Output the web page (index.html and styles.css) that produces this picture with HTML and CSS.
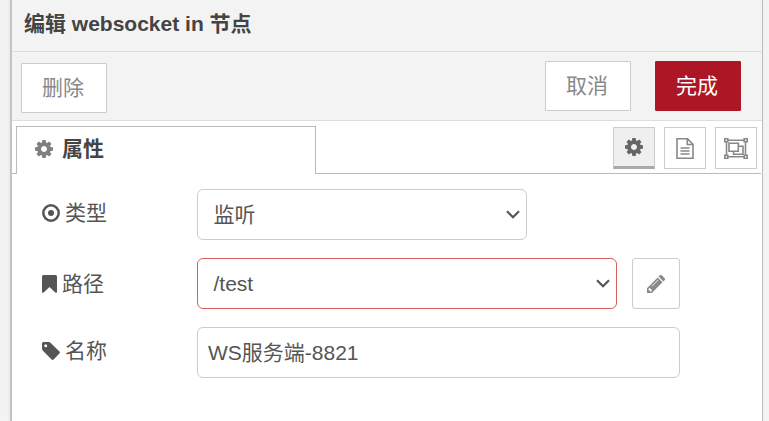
FILE: index.html
```html
<!DOCTYPE html>
<html lang="zh-CN">
<head>
<meta charset="utf-8">
<title>编辑 websocket in 节点</title>
<link rel="stylesheet" href="styles.css">
</head>
<body>
<svg class="sprite" aria-hidden="true">
  <symbol id="cog" viewBox="128 128 1536 1536"><path fill-rule="evenodd" d="M1152 896q0-106-75-181t-181-75-181 75-75 181 75 181 181 75 181-75 75-181zm512-109v222q0 12-8 23t-20 13l-185 28q-19 54-39 91 35 50 107 138 10 12 10 25t-9 23q-27 37-99 108t-94 71q-12 0-26-9l-138-108q-44 23-91 38-16 136-29 186-7 28-36 28h-222q-14 0-24.500-8.500t-11.500-21.500l-28-184q-49-16-90-37l-141 107q-10 9-25 9-14 0-25-11-126-114-165-168-7-10-7-23 0-12 8-23 15-21 51-66.500t54-70.500q-27-50-41-99l-183-27q-13-2-21-12.500t-8-23.500v-222q0-12 8-23t19-13l186-28q14-46 39-92-40-57-107-138-10-12-10-24 0-10 9-23 26-36 98.500-107.500t94.500-71.500q13 0 26 10l138 107q44-23 91-38 16-136 29-186 7-28 36-28h222q14 0 24.500 8.500t11.500 21.500l28 184q49 16 90 37l142-107q9-9 24-9 13 0 25 10 129 119 165 170 7 8 7 22 0 12-8 23-15 21-51 66.500t-54 70.500q26 50 41 98l183 28q13 2 21 12.500t8 23.500z"/></symbol>
</svg>
<main class="tray">
  <header class="tray-header">编辑 websocket in 节点</header>
  <div class="toolbar">
    <button class="btn btn-delete">删除</button>
    <div class="toolbar-right">
      <button class="btn">取消</button>
      <button class="btn btn-primary">完成</button>
    </div>
  </div>
  <div class="tabs">
    <div class="tab"><svg class="icon"><use href="#cog"/></svg><span>属性</span></div>
    <div class="tab-buttons">
      <button class="tab-button active"><svg class="icon"><use href="#cog"/></svg></button>
      <button class="tab-button"><svg class="icon-doc" viewBox="0 0 18 21"><path d="M1 .8h10.500L17 6.300v13.900H1zM11.300.8v5.700H17M4.500 10h9M4.500 13h9M4.500 16h9"/></svg></button>
      <button class="tab-button"><svg class="icon-group" viewBox="0 0 24 21"><path d="M4 2.300h16M4 18.700h16M2.500 4v13M21.500 4v13M5 5.200h9.300v8H5zM14.300 8.200H19v8H9.500v-3M.8.800h3v3h-3zM20.200.8h3v3h-3zM.8 17.200h3v3h-3zM20.200 17.200h3v3h-3z"/></svg></button>
    </div>
  </div>
  <form class="form">
    <div class="row">
      <label class="label"><svg class="icon" viewBox="0 0 18 18"><circle class="ring" cx="9" cy="9" r="7.700"/><circle cx="9" cy="9" r="3"/></svg>类型</label>
      <div class="field select type"><span>监听</span><svg class="chevron" viewBox="0 0 14 9"><path d="M1 1.200l6 6 6-6"/></svg></div>
    </div>
    <div class="row">
      <label class="label label-path"><svg class="icon-bookmark" viewBox="0 0 15 18"><path d="M1.500 0h12Q15 0 15 1.500v15q0 2-1.700 1.100L7.500 12l-5.800 5.600Q0 18.500 0 16.500v-15Q0 0 1.500 0z"/></svg>路径</label>
      <div class="field select path invalid"><span>/test</span><svg class="chevron" viewBox="0 0 14 9"><path d="M1 1.200l6 6 6-6"/></svg></div>
      <button type="button" class="edit"><svg class="icon" viewBox="0 0 18 18"><path fill-rule="evenodd" d="M0 13.200L10.700 2.500l4.800 4.800L4.800 18H0zM1.500 13.900v1.300h1.300v1.300h1.300l1.100-1.100-2.600-2.600zM11.100 4.500L4.600 11l.4.400 6.500-6.500zM11.600 1.600L13 .3q.8-.7 1.700 0l3 3q.7.900 0 1.700l-1.300 1.400z"/></svg></button>
    </div>
    <div class="row">
      <label class="label"><svg class="icon" viewBox="0 0 18 18"><path fill-rule="evenodd" d="M0 1.500Q0 0 1.500 0h5q1.200 0 2.500 1.200l8.400 8.300q.9 1 0 2l-5.800 6q-1 .9-2 0L1.200 9Q0 7.700 0 6.500zM3.700 2.200a1.500 1.500 0 1 0 0 3 1.500 1.500 0 0 0 0-3z"/></svg>名称</label>
      <div class="field name">WS服务端-8821</div>
    </div>
  </form>
</main>
</body>
</html>
```
FILE: styles.css
```css
* { box-sizing: border-box; }

body {
  display: flex;
  height: 421px;
  margin: 0;
  padding: 0 6px 0 10px;
  overflow: hidden;
  background: #f3f3f3;
  color: #555;
  font: 21px/30px "Liberation Sans", "Noto Sans CJK SC", sans-serif;
}

button {
  padding: 0;
  font: inherit;
}

svg {
  display: block;
  flex: none;
  fill: currentColor;
}

.sprite {
  position: absolute;
  width: 0;
  height: 0;
}

.tray {
  flex: 1;
  border-right: 1px solid #bbb;
  border-left: 2px solid #c4c4c4;
  background: #fff;
  box-shadow: -1px 0 2px rgba(0, 0, 0, .06);
}

.tray-header {
  height: 52px;
  padding: 9px 12px 0;
  border-bottom: 1px solid #ddd;
  background: #f3f3f3;
  color: #444;
  font-weight: bold;
}

.toolbar {
  display: flex;
  justify-content: space-between;
  height: 69px;
  padding: 9px 21px 0 9px;
  border-bottom: 1px solid #ddd;
  background: #f3f3f3;
}

.toolbar-right {
  display: flex;
  gap: 24px;
}

.btn {
  width: 86px;
  height: 50px;
  padding-right: 2px;
  border: 1px solid #ccc;
  border-radius: 1px;
  background: #fff;
  color: #888;
}

.btn-delete { margin-top: 2px; }

.btn-primary {
  border-color: #ad1625;
  background: #ad1625;
  color: #fff;
}

.tabs {
  display: flex;
  justify-content: space-between;
  height: 53px;
  margin-right: 1px;
  padding: 5px 4px 0;
  border-bottom: 1px solid #bbb;
}

.tab {
  display: flex;
  align-items: center;
  gap: 9px;
  width: 300px;
  height: 48px;
  padding: 0 18px 4px;
  border: 1px solid #bbb;
  border-bottom: 0;
  background: #fff;
  color: #444;
  font-weight: bold;
}

.tab .icon { color: #808080; }

.icon {
  width: 18px;
  height: 18px;
}

.tab-buttons {
  display: flex;
  gap: 9px;
  padding-top: 1px;
}

.tab-button {
  display: flex;
  align-items: center;
  justify-content: center;
  width: 42px;
  height: 42px;
  border: 1px solid #ccc;
  background: #fff;
  color: #888;
}

.tab-button.active {
  border-bottom: 3px solid #aaa;
  background: #efefef;
  color: #666;
}

.icon-doc,
.icon-group,
.chevron {
  fill: none;
  stroke: currentColor;
}

.icon-doc {
  width: 18px;
  height: 21px;
  stroke-width: 1.6;
}

.icon-group {
  width: 24px;
  height: 21px;
  stroke-width: 1.6;
}

.form {
  display: grid;
  gap: 18px;
  padding: 15px 0 0 29px;
}

.row {
  display: flex;
  height: 51px;
}

.label {
  display: flex;
  align-items: center;
  gap: 5px;
  width: 156px;
  height: 48px;
  padding-left: 1px;
}

.label-path { height: 51px; }

.ring {
  fill: none;
  stroke: currentColor;
  stroke-width: 2.5;
}

.icon-bookmark {
  width: 15px;
  height: 18px;
}

.field {
  display: flex;
  align-items: center;
  height: 51px;
  padding: 0 10px;
  border: 1px solid #ccc;
  border-radius: 6px;
  background: #fff;
}

.select {
  justify-content: space-between;
  padding: 0 6px 0 15.5px;
}

.type { width: 330px; }
.path { width: 420px; }
.name { width: 483px; }
.invalid { border-color: #d6615f; }

.chevron {
  width: 14px;
  height: 9px;
  stroke-width: 2.2;
}

.edit {
  display: flex;
  align-items: center;
  justify-content: center;
  width: 48px;
  height: 51px;
  margin-left: 15px;
  border: 1px solid #ccc;
  border-radius: 3px;
  background: #fff;
  color: #888;
}
```
